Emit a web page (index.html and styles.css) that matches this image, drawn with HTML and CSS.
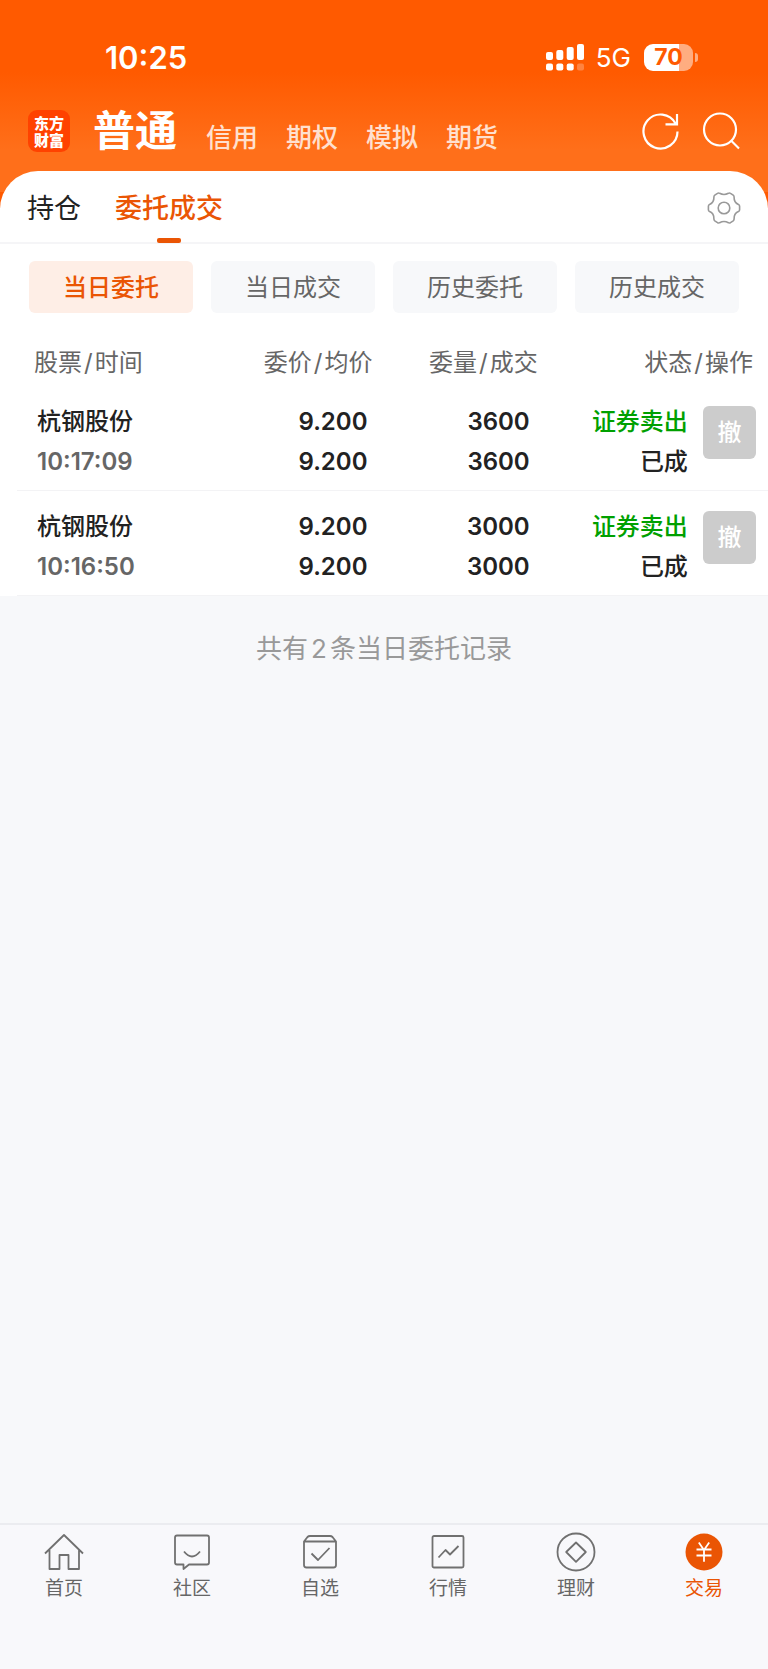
FILE: index.html
```html
<!DOCTYPE html>
<html lang="zh-CN">
<head>
    <meta charset="UTF-8">
    <meta name="viewport" content="width=device-width, initial-scale=1.0">
    <title>委托成交</title>
    <link rel="stylesheet" href="styles.css">
</head>
<body>
    <header class="top">
        <div class="status-bar">
            <span class="time">10:25</span>
            <div class="status-icons">
                <svg class="signal" width="38" height="27" viewBox="0 0 38 27" fill="#fff">
                    <rect x="0" y="8" width="7" height="8" rx="2"/>
                    <rect x="10.3" y="6" width="7" height="10" rx="2"/>
                    <rect x="20.7" y="3" width="7" height="13" rx="2"/>
                    <rect x="31" y="0" width="7" height="16" rx="2"/>
                    <rect x="0" y="19.5" width="7" height="7" rx="2"/>
                    <rect x="10.3" y="19.5" width="7" height="7" rx="2"/>
                    <rect x="20.7" y="19.5" width="7" height="7" rx="2"/>
                    <rect x="31" y="19.5" width="7" height="7" rx="2" opacity="0.25"/>
                </svg>
                <span class="network">5G</span>
                <span class="battery">70</span>
            </div>
        </div>
        <nav class="account-nav">
            <a href="#" class="logo"><span>东方</span><span>财富</span></a>
            <a href="#" class="account active">普通</a>
            <a href="#" class="account">信用</a>
            <a href="#" class="account">期权</a>
            <a href="#" class="account">模拟</a>
            <a href="#" class="account">期货</a>
            <div class="actions">
                <button type="button" aria-label="刷新">
                    <svg width="38" height="38" viewBox="0 0 38 38" fill="none" stroke="#fff" stroke-width="2.2">
                        <path d="M36.5 19.500A17 17 0 1 1 34.500 11.500M36 2V12.300H24.500"/>
                    </svg>
                </button>
                <button type="button" aria-label="搜索">
                    <svg width="38" height="38" viewBox="0 0 38 38" fill="none" stroke="#fff" stroke-width="2.2">
                        <circle cx="18" cy="17.5" r="16"/>
                        <path d="M29 28.5L37 36.5"/>
                    </svg>
                </button>
            </div>
        </nav>
    </header>

    <main class="card">
        <div class="tabs">
            <a href="#" class="tab">持仓</a>
            <a href="#" class="tab active">委托成交</a>
            <button type="button" class="settings" aria-label="设置">
                <svg width="34" height="34" viewBox="0 0 34 34" fill="none" stroke="#999" stroke-width="1.6" stroke-linejoin="round">
                    <path d="M10.5 2.4Q11.5 1.6 12.6 2.3Q17 4.6 21.4 2.3Q22.5 1.6 23.5 2.4L26.2 4.2Q27.2 4.9 27.1 6.2Q26.9 11.4 31.4 13.4Q32.6 14 32.6 15.3V18.7Q32.6 20 31.4 20.6Q26.9 22.6 27.1 27.8Q27.2 29.1 26.2 29.8L23.5 31.6Q22.5 32.4 21.4 31.7Q17 29.4 12.6 31.7Q11.5 32.4 10.5 31.6L7.8 29.8Q6.8 29.1 6.9 27.8Q7.1 22.6 2.6 20.6Q1.4 20 1.4 18.7V15.3Q1.4 14 2.6 13.4Q7.1 11.4 6.9 6.2Q6.8 4.9 7.8 4.2Z"/>
                    <circle cx="17" cy="17" r="5.8"/>
                </svg>
            </button>
        </div>

        <div class="filters">
            <button type="button" class="filter active">当日委托</button>
            <button type="button" class="filter">当日成交</button>
            <button type="button" class="filter">历史委托</button>
            <button type="button" class="filter">历史成交</button>
        </div>

        <table class="orders">
            <colgroup>
                <col class="col-stock">
                <col class="col-price">
                <col class="col-amount">
                <col class="col-state">
                <col class="col-operate">
            </colgroup>
            <thead>
                <tr>
                    <th class="stock">股票<i>/</i>时间</th>
                    <th class="price">委价<i>/</i>均价</th>
                    <th class="amount">委量<i>/</i>成交</th>
                    <th class="state" colspan="2">状态<i>/</i>操作</th>
                </tr>
            </thead>
            <tbody>
                <tr>
                    <td class="stock">杭钢股份<div class="order-time">10:17:09</div></td>
                    <td class="price">9.200<div>9.200</div></td>
                    <td class="amount">3600<div>3600</div></td>
                    <td class="state"><span class="sell">证券卖出</span><div>已成</div></td>
                    <td class="operate"><button type="button" class="cancel">撤</button></td>
                </tr>
                <tr>
                    <td class="stock">杭钢股份<div class="order-time">10:16:50</div></td>
                    <td class="price">9.200<div>9.200</div></td>
                    <td class="amount">3000<div>3000</div></td>
                    <td class="state"><span class="sell">证券卖出</span><div>已成</div></td>
                    <td class="operate"><button type="button" class="cancel">撤</button></td>
                </tr>
            </tbody>
        </table>
    </main>

    <p class="summary">共有<span>2</span>条当日委托记录</p>

    <nav class="tab-bar">
        <a href="#">
            <svg width="40" height="40" viewBox="0 0 40 40">
                <path d="M1 21.5L20 3L39 21.5M5.5 18V37H15.5V23H24.5V37H35V18"/>
            </svg>
            首页
        </a>
        <a href="#">
            <svg width="40" height="40" viewBox="0 0 40 40">
                <path d="M5 3.5H35Q37 3.5 37 5.5V30.5Q37 32.5 35 32.5H17L11.5 37V32.5H5Q3 32.5 3 30.5V5.5Q3 3.5 5 3.5Z"/>
                <path d="M12 19.5Q20 29.5 28 19.5"/>
            </svg>
            社区
        </a>
        <a href="#">
            <svg width="40" height="40" viewBox="0 0 40 40">
                <path d="M4 9.5V33Q4 35.5 6.5 35.5H33.5Q36 35.5 36 33V9.5L32.5 5Q31.5 4 30 4H10Q8.5 4 7.5 5ZM4 9.5H36"/>
                <path d="M11.5 21.5L18 28L29.5 16"/>
            </svg>
            自选
        </a>
        <a href="#">
            <svg width="40" height="40" viewBox="0 0 40 40">
                <rect x="4.5" y="4" width="31" height="31.5" rx="1.5"/>
                <path d="M10.5 25.5L17.5 18L22 22.5L30.5 14"/>
            </svg>
            行情
        </a>
        <a href="#">
            <svg width="40" height="40" viewBox="0 0 40 40">
                <circle cx="20" cy="20" r="18.5"/>
                <path d="M20 10.500L29.800 20L20 29.800L10.200 20Z"/>
            </svg>
            理财
        </a>
        <a href="#" class="active">
            <svg width="40" height="40" viewBox="0 0 40 40">
                <circle class="coin" cx="20" cy="20" r="18.5"/>
                <path class="yen" d="M14.800 10.500L20 18L25.200 10.500M20 18V29.800M12.500 17.500H27.500M12.500 23.500H27.500"/>
            </svg>
            交易
        </a>
    </nav>
</body>
</html>
```

FILE: styles.css
```css
* {
    box-sizing: border-box;
}
body {
    margin: 0;
    min-height: 100vh;
    display: flex;
    flex-direction: column;
    background-color: #f7f8fa;
    color: #222;
    font-family: Inter, "Noto Sans CJK SC", sans-serif;
    font-size: 24px;
}
a {
    color: inherit;
    text-decoration: none;
}
button {
    padding: 0;
    border: none;
    background: none;
    color: inherit;
    font: inherit;
}
svg {
    display: block;
}

/* 顶部 */
.top {
    padding-bottom: 48px;
    background: linear-gradient(#ff5a00 0, #ff5a00 72px, #ff6f1a 150px, #ff6f1a 192px, #ff5a00 192px);
    color: #fff;
}
.status-bar {
    display: flex;
    justify-content: space-between;
    align-items: center;
    height: 102px;
    padding: 12px 70px 0 105px;
}
.time {
    font-size: 31px;
    font-weight: 600;
}
.status-icons {
    display: flex;
    align-items: center;
}
.network {
    margin: 2px 13px 0 12px;
    font-size: 26px;
    line-height: 26px;
}
.battery {
    position: relative;
    width: 49px;
    margin-right: 5px;
    border-radius: 9px;
    background: linear-gradient(90deg, #fff 71%, #ffad80 71%);
    color: #ff5a00;
    font-size: 23px;
    font-weight: 700;
    line-height: 27px;
    text-align: center;
}
.battery::after {
    content: "";
    position: absolute;
    top: 9px;
    right: -5px;
    width: 3px;
    height: 9px;
    border-radius: 0 4px 4px 0;
    background-color: #ffad80;
}
.account-nav {
    display: flex;
    align-items: center;
    height: 58px;
    padding: 0 28px;
}
.logo {
    display: flex;
    flex-direction: column;
    align-items: center;
    justify-content: center;
    gap: 1px;
    width: 42px;
    height: 42px;
    margin-right: 23px;
    border-radius: 9px;
    background-color: #ff4200;
    font-family: "Noto Sans CJK SC", sans-serif;
    font-size: 15px;
    font-weight: 900;
    line-height: 16px;
}
.account {
    margin-right: 28px;
    padding-top: 14px;
    color: #ffe0cf;
    font-size: 26px;
    font-weight: 500;
    line-height: 32px;
}
.account.active {
    margin-right: 29px;
    padding-top: 0;
    color: #fff;
    font-size: 42px;
    font-weight: 700;
    line-height: 58px;
}
.actions {
    display: flex;
    gap: 23px;
    margin-left: auto;
}

/* 内容 */
.card {
    margin-top: -37px;
    border-radius: 38px 38px 0 0;
    background-color: #fff;
}
.tabs {
    display: flex;
    align-items: center;
    gap: 34px;
    height: 73px;
    padding: 0 27px;
    border-bottom: 2px solid #f5f5f7;
}
.tab {
    position: relative;
    padding-top: 5px;
    font-size: 27px;
    line-height: 66px;
}
.tab.active {
    color: #ea5504;
    font-weight: 500;
}
.tab.active::after {
    content: "";
    position: absolute;
    bottom: -1px;
    left: calc(50% - 12px);
    width: 24px;
    height: 5px;
    border-radius: 2px;
    background-color: #ea5504;
}
.settings {
    margin-left: auto;
    padding-top: 3px;
}
.filters {
    display: grid;
    grid-template-columns: repeat(4, 1fr);
    gap: 18px;
    padding: 17px 29px 24px;
}
.filter {
    height: 52px;
    padding-bottom: 3px;
    border-radius: 6px;
    background-color: #f7f8fa;
    color: #666;
}
.filter.active {
    background-color: #feeee6;
    color: #ea5504;
    font-weight: 500;
}

/* 委托列表 */
.orders {
    width: calc(100% - 17px);
    margin-left: 17px;
    border-collapse: collapse;
    table-layout: fixed;
}
.col-stock {
    width: 26%;
}
.col-price,
.col-amount {
    width: 22%;
}
.col-state {
    width: 20%;
}
.col-operate {
    width: 10%;
}
.orders th {
    height: 49px;
    padding: 0 5px 3px 0;
    color: #666;
    font-weight: 400;
    text-align: right;
}
.orders th i {
    padding: 0 2px;
    font-style: normal;
}
.orders td {
    padding: 16px 5px 8px 0;
    border-bottom: 1px solid #f3f3f5;
    font-weight: 500;
    line-height: 40px;
    text-align: right;
    vertical-align: top;
}
.orders th.stock {
    padding-left: 17px;
    text-align: left;
}
.orders td.stock {
    padding-left: 20px;
    text-align: left;
}
.orders th.state {
    padding-right: 15px;
}
.orders td.price {
    padding-right: 10px;
    font-weight: 600;
}
.orders td.amount {
    padding-right: 13px;
    font-weight: 600;
}
.order-time {
    color: #666;
    font-weight: 600;
}
.sell {
    color: #00a000;
}
.orders td.operate {
    padding: 20px 12px 0 0;
}
.cancel {
    display: block;
    width: 53px;
    height: 53px;
    margin-left: auto;
    border-radius: 6px;
    background-color: #ccc;
    color: #fff;
}
.summary {
    margin: 33px 0;
    color: #999;
    font-size: 26px;
    line-height: 40px;
    text-align: center;
}
.summary span {
    padding: 0 3px;
}

/* 底部导航 */
.tab-bar {
    display: grid;
    grid-template-columns: repeat(6, 1fr);
    height: 146px;
    margin-top: auto;
    padding-top: 7px;
    border-top: 2px solid #ebecf0;
    background-color: #f8f8fb;
    color: #666;
    font-size: 19px;
    line-height: 34px;
}
.tab-bar a {
    display: flex;
    flex-direction: column;
    align-items: center;
}
.tab-bar svg {
    fill: none;
    stroke: #707070;
    stroke-width: 1.8;
    stroke-linejoin: round;
}
.tab-bar .active {
    color: #ea5504;
}
.tab-bar .coin {
    fill: #ea5504;
    stroke: none;
}
.tab-bar .yen {
    stroke: #fff;
}
```
